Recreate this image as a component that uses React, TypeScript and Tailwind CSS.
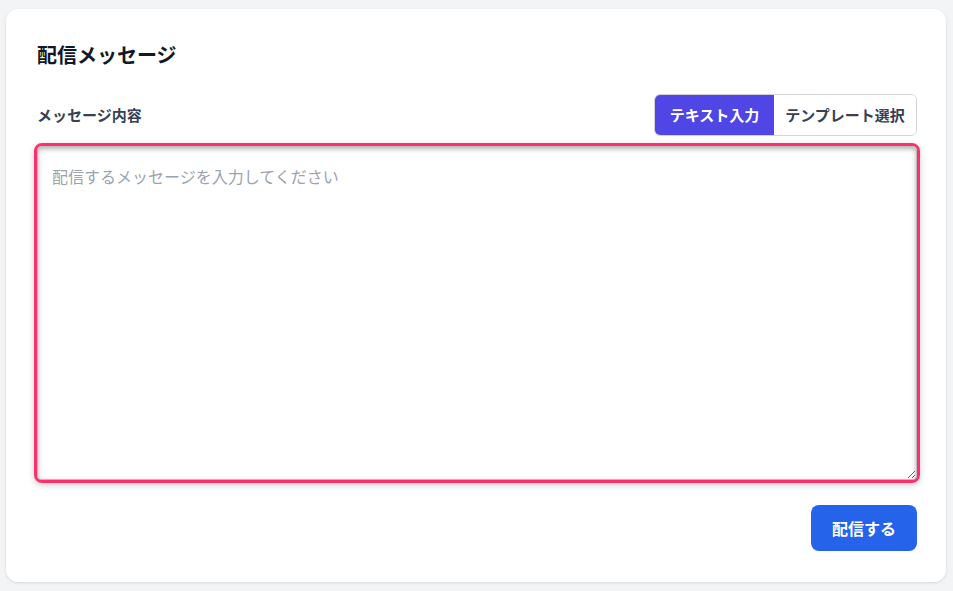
import React from "react";

export default function App() {
  return (
    <div
      className="w-[953px] h-[591px] bg-[#f3f4f6] pl-[6px] pr-[7px] pt-[9px] pb-[9px]"
      style={{ fontFamily: '"Noto Sans CJK JP", "Noto Sans", sans-serif' }}
    >
      <div className="bg-white rounded-xl shadow-[0_1px_3px_rgba(0,0,0,0.12)] pl-[31px] pr-[29px] pt-[32px] pb-[31px] h-[573px] flex flex-col">
        <h2 className="text-[20px] leading-7 font-bold text-[#111827] mb-[25px]">配信メッセージ</h2>
        <div className="flex items-center justify-between mb-[7px]">
          <span className="text-[15px] font-semibold text-[#374151]">メッセージ内容</span>
          <div className="flex h-[42px] rounded-md border border-[#d1d5db] overflow-hidden">
            <button className="w-[119px] h-full bg-[#4f46e5] text-white text-[15px] font-bold flex items-center justify-center">
              テキスト入力
            </button>
            <button className="w-[142px] h-full bg-white text-[#374151] text-[15px] font-bold flex items-center justify-center">
              テンプレート選択
            </button>
          </div>
        </div>
        <div className="-mx-[3px] border-[3px] border-[#ff2e6e] rounded-lg shadow-[0_2px_6px_rgba(0,0,0,0.2)]">
          <textarea
            placeholder="配信するメッセージを入力してください"
            className="block w-full h-[334px] border border-[#bdbdbd] rounded-[4px] shadow-[inset_0_2px_5px_rgba(0,0,0,0.3)] px-[14px] pt-[17px] text-[16px] leading-6 text-[#111827] placeholder:text-[#9ca3af] outline-none"
          />
        </div>
        <div className="flex justify-end mt-[22px]">
          <button className="h-[46px] px-[21px] rounded-lg bg-[#2563eb] text-white text-[16px] font-bold">
            配信する
          </button>
        </div>
      </div>
    </div>
  );
}
